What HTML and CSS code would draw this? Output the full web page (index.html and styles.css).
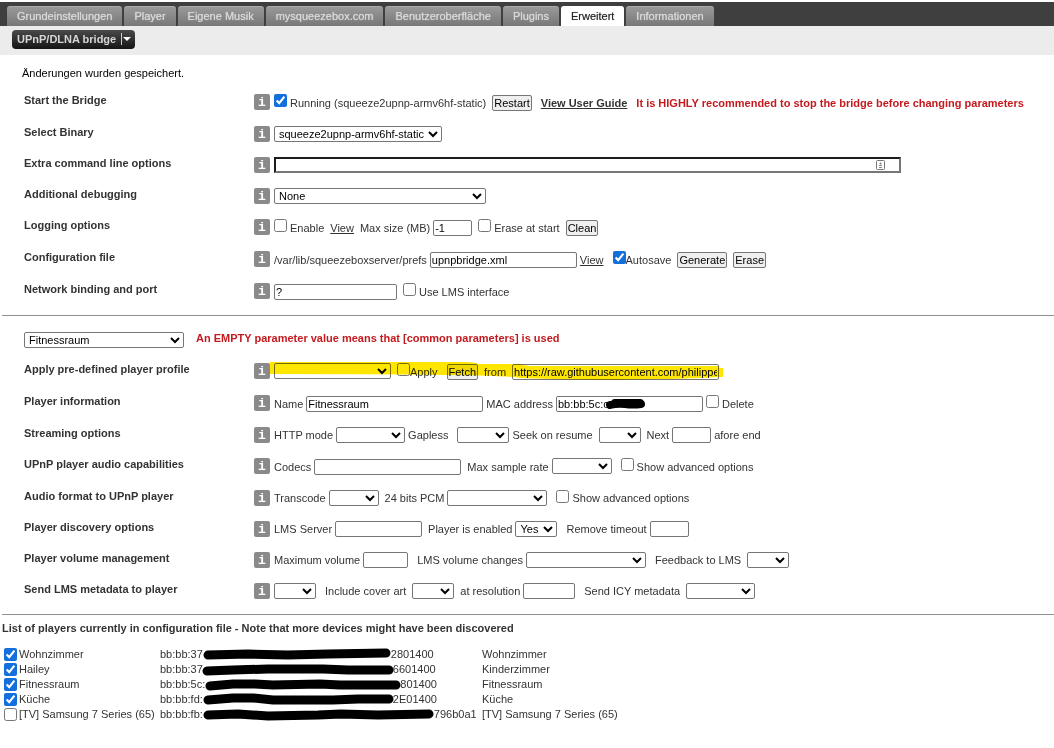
FILE: index.html
```html
<!DOCTYPE html>
<html lang="de">
<head>
<meta charset="utf-8">
<title>UPnP/DLNA bridge</title>
<link rel="stylesheet" href="styles.css">
</head>
<body>
<header class="top">
  <nav class="tabs">
    <a class="tab" href="#">Grundeinstellungen</a>
    <a class="tab" href="#">Player</a>
    <a class="tab" href="#">Eigene Musik</a>
    <a class="tab" href="#">mysqueezebox.com</a>
    <a class="tab" href="#">Benutzeroberfläche</a>
    <a class="tab" href="#">Plugins</a>
    <a class="tab active" href="#">Erweitert</a>
    <a class="tab" href="#">Informationen</a>
  </nav>
  <div class="subbar">
    <button class="plugin" type="button">UPnP/DLNA bridge<span class="arrow"></span></button>
  </div>
</header>
<main>
  <p class="message">Änderungen wurden gespeichert.</p>
  <section class="rows">
    <div class="row tall">
      <h2 class="label">Start the Bridge</h2><button class="info" type="button">i</button>
      <div class="fields"><input type="checkbox" id="run" checked><label class="s" for="run">Running (squeeze2upnp-armv6hf-static)</label><button class="btn m" type="button">Restart</button><a class="l" href="#"><b>View User Guide</b></a><strong class="warn l">It is HIGHLY recommended to stop the bridge before changing parameters</strong></div>
    </div>
    <div class="row">
      <h2 class="label">Select Binary</h2><button class="info" type="button">i</button>
      <div class="fields"><select class="w168" aria-label="Select Binary"><option>squeeze2upnp-armv6hf-static</option></select></div>
    </div>
    <div class="row">
      <h2 class="label">Extra command line options</h2><button class="info" type="button">i</button>
      <div class="fields"><span class="over wide"><input class="focused" type="text" aria-label="Extra command line options"><svg class="fill" viewBox="0 0 9 10"><rect x=".5" y=".5" width="8" height="9" rx="1" fill="#fff" stroke="#777"/><circle cx="4.5" cy="3.5" r="1" fill="#777"/><path d="M3 5.5h3M3 7.5h3" stroke="#888"/></svg></span></div>
    </div>
    <div class="row">
      <h2 class="label">Additional debugging</h2><button class="info" type="button">i</button>
      <div class="fields"><select class="w212" aria-label="Additional debugging"><option>None</option></select></div>
    </div>
    <div class="row tall">
      <h2 class="label">Logging options</h2><button class="info" type="button">i</button>
      <div class="fields"><input type="checkbox" id="log"><label class="s" for="log">Enable</label><a class="m" href="#">View</a><label class="m" for="size">Max size (MB)</label><input class="w39 s" type="text" id="size" value="-1"><input class="m" type="checkbox" id="ers"><label class="s" for="ers">Erase at start</label><button class="btn m" type="button">Clean</button></div>
    </div>
    <div class="row tall">
      <h2 class="label">Configuration file</h2><button class="info" type="button">i</button>
      <div class="fields"><label for="conf">/var/lib/squeezeboxserver/prefs</label><input class="w147 s" type="text" id="conf" value="upnpbridge.xml"><a class="s" href="#">View</a><input class="l" type="checkbox" id="auto" checked><label for="auto">Autosave</label><button class="btn m" type="button">Generate</button><button class="btn m" type="button">Erase</button></div>
    </div>
    <div class="row tall">
      <h2 class="label">Network binding and port</h2><button class="info" type="button">i</button>
      <div class="fields"><input class="w123" type="text" value="?" aria-label="Network binding and port"><input class="m" type="checkbox" id="lms"><label class="s" for="lms">Use LMS interface</label></div>
    </div>
  </section>
  <hr>
  <section class="rows">
    <div class="player">
      <select class="w160" aria-label="Player"><option>Fitnessraum</option></select>
      <strong class="warn">An EMPTY parameter value means that [common parameters] is used</strong>
    </div>
    <div class="row tall">
      <h2 class="label">Apply pre-defined player profile</h2><button class="info" type="button">i</button>
      <div class="fields"><span class="over marked"><select class="w117" aria-label="Profile"><option></option></select><input class="m" type="checkbox" id="apply"><label for="apply">Apply</label><button class="btn l" type="button">Fetch</button><label class="m" for="url">from</label><input class="w207 m" type="text" id="url" value="https://raw.githubusercontent.com/philippe44"><svg class="marker" viewBox="0 0 454 20" preserveAspectRatio="none"><path d="M0 1H195Q207 1 209 3H250Q256 5 265 5H450V7H454V16H450Q415 18 385 18Q330 20 250 17Q238 13 0 13Z" fill="#ffe600"/></svg></span></div>
    </div>
    <div class="row tall">
      <h2 class="label">Player information</h2><button class="info" type="button">i</button>
      <div class="fields"><label for="name">Name</label><input class="w177 s" type="text" id="name" value="Fitnessraum"><label class="s" for="mac">MAC address</label><span class="over s"><input class="w147" type="text" id="mac" value="bb:bb:5c:c"><svg class="blot" viewBox="0 0 41 11"><path d="M5 7Q12 5 20 6T36 6M10 5L35 5" fill="none" stroke="#000" stroke-width="8" stroke-linecap="round"/></svg></span><input class="s" type="checkbox" id="del"><label class="s" for="del">Delete</label></div>
    </div>
    <div class="row">
      <h2 class="label">Streaming options</h2><button class="info" type="button">i</button>
      <div class="fields"><label for="http">HTTP mode</label><select class="w69 s" id="http"><option></option></select><label class="s" for="gap">Gapless</label><select class="w52 l" id="gap"><option></option></select><label class="s" for="seek">Seek on resume</label><select class="w41 m" id="seek"><option></option></select><label class="m" for="next">Next</label><input class="w39 s" type="text" id="next"><span class="s">afore end</span></div>
    </div>
    <div class="row tall">
      <h2 class="label">UPnP player audio capabilities</h2><button class="info" type="button">i</button>
      <div class="fields"><label for="codecs">Codecs</label><input class="w147 s" type="text" id="codecs"><label class="m" for="rate">Max sample rate</label><select class="w60 s" id="rate"><option></option></select><input class="l" type="checkbox" id="adv1"><label class="s" for="adv1">Show advanced options</label></div>
    </div>
    <div class="row">
      <h2 class="label">Audio format to UPnP player</h2><button class="info" type="button">i</button>
      <div class="fields"><label for="trans">Transcode</label><select class="w49 s" id="trans"><option></option></select><label class="m" for="pcm">24 bits PCM</label><select class="w100 s" id="pcm"><option></option></select><input class="l" type="checkbox" id="adv2"><label class="s" for="adv2">Show advanced options</label></div>
    </div>
    <div class="row">
      <h2 class="label">Player discovery options</h2><button class="info" type="button">i</button>
      <div class="fields"><label for="srv">LMS Server</label><input class="w87 s" type="text" id="srv"><label class="m" for="en">Player is enabled</label><select class="w41 s" id="en"><option>Yes</option></select><label class="l" for="rem">Remove timeout</label><input class="w39 s" type="text" id="rem"></div>
    </div>
    <div class="row">
      <h2 class="label">Player volume management</h2><button class="info" type="button">i</button>
      <div class="fields"><label for="vol">Maximum volume</label><input class="w45 s" type="text" id="vol"><label class="l" for="chg">LMS volume changes</label><select class="w120 s" id="chg"><option></option></select><label class="l" for="fb">Feedback to LMS</label><select class="w41 m" id="fb"><option></option></select></div>
    </div>
    <div class="row">
      <h2 class="label">Send LMS metadata to player</h2><button class="info" type="button">i</button>
      <div class="fields"><select class="w41" aria-label="Send metadata"><option></option></select><label class="l" for="art">Include cover art</label><select class="w41 m" id="art"><option></option></select><label class="m" for="res">at resolution</label><input class="w52 s" type="text" id="res"><label class="l" for="icy">Send ICY metadata</label><select class="w69 m" id="icy"><option></option></select></div>
    </div>
  </section>
  <hr>
  <h2 class="list-title">List of players currently in configuration file - Note that more devices might have been discovered</h2>
  <table class="list">
    <tr><td><label><input type="checkbox" checked>Wohnzimmer</label></td><td><span class="id">bb:bb:37<svg width="188" height="13" viewBox="0 0 188 13"><path d="M5 7L45 6L85 7L125 6L183 5" /></svg>2801400</span></td><td>Wohnzimmer</td></tr>
    <tr><td><label><input type="checkbox" checked>Hailey</label></td><td><span class="id">bb:bb:37<svg width="190" height="13" viewBox="0 0 190 13"><path d="M4 8L30 7L65 6L120 6L145 7L186 7"/></svg>6601400</span></td><td>Kinderzimmer</td></tr>
    <tr><td><label><input type="checkbox" checked>Fitnessraum</label></td><td><span class="id">bb:bb:5c:<svg width="195" height="13" viewBox="0 0 195 13"><path d="M5 8L28 6L50 6L68 7L115 6L135 7L191 7"/></svg>801400</span></td><td>Fitnessraum</td></tr>
    <tr><td><label><input type="checkbox" checked>Küche</label></td><td><span class="id">bb:bb:fd:<svg width="190" height="13" viewBox="0 0 190 13"><path d="M5 7L30 5L50 5L70 7L110 7L130 7L155 6L186 6"/></svg>2E01400</span></td><td>Küche</td></tr>
    <tr><td><label><input type="checkbox">[TV] Samsung 7 Series (65)</label></td><td><span class="id">bb:bb:fb:<svg width="231" height="13" viewBox="0 0 231 13"><path d="M5 7L35 6L65 8L115 7L138 6L175 7L226 6"/></svg>796b0a1</span></td><td>[TV] Samsung 7 Series (65)</td></tr>
  </table>
</main>
</body>
</html>
```
FILE: styles.css
```css
* { box-sizing: border-box; }
body { margin: 0; background: #fff; color: #333; font: 11px/16px "Liberation Sans", Arial, sans-serif; }
h2, p { margin: 0; font-size: 11px; }
a { color: #333; }
button, input, select { margin: 0; font: 11px "Liberation Sans", Arial, sans-serif; color: #000; }

.top { padding-top: 2px; }
.tabs { display: flex; gap: 2px; padding: 4px 7px 0; background: #3f3f3f; }
.tab { padding: 0 10px; height: 20px; line-height: 18px; border-radius: 3px 3px 0 0; border-top: 1px solid #aaa; background: linear-gradient(#999, #777); color: #d8d8d8; text-decoration: none; text-shadow: 0 0 1px #d8d8d8; }
.tab.active { background: #fff; border-color: #fff; color: #222; text-shadow: 0 0 1px #888; }
.subbar { height: 29px; padding: 4px 12px; background: #ececec; }
.plugin { display: flex; align-items: center; height: 19px; padding: 0 4px 2px 5px; border: 0; border-radius: 4px; background: linear-gradient(#4a4a4a, #151515); color: #d6d6d6; font-weight: bold; }
.arrow { display: flex; align-items: center; height: 12px; margin-left: 5px; padding-left: 1px; border-left: 1px solid #ccc; }
.arrow::after { content: ""; border: 4px solid transparent; border-top-color: #fff; border-bottom: 0; }

.message { padding: 10px 22px 13px; color: #000; }
.rows { padding-left: 24px; }
.row { display: flex; align-items: flex-start; min-height: 31px; }
.row.tall { min-height: 32px; }
.label { width: 230px; flex: none; line-height: 12px; }
.info { flex: none; width: 16px; height: 16px; margin-right: 4px; padding: 1px 0 0; border: 0; border-radius: 2px; background: #8a8a8a; color: #fff; font: bold 13px/15px "Liberation Mono", monospace; }
.fields, .over { display: flex; flex: 1; align-items: flex-start; white-space: nowrap; }
.over { position: relative; flex: none; }
.tall label, .tall a, .tall .btn, .tall .warn, .tall input[type=text] { margin-top: 1px; }
input[type=text], select { height: 16px; border: 1px solid #767676; border-radius: 2px; background-color: #fff; }
input[type=text] { padding: 0 1px; }
select { padding: 0; }
input[type=checkbox] { flex: none; width: 13px; height: 13px; accent-color: #136fdc; }
.btn { height: 16px; padding: 0 1px; border: 1px solid #767676; border-radius: 2px; background: #efefef; }
.warn { color: #c41a1f; }
.s { margin-left: 3px; }
.m { margin-left: 6px; }
.l { margin-left: 9px; }

.over.wide { flex: 0 1 627px; }
input.focused { width: 100%; border: 2px solid #767676; border-top-color: #1c1c1c; border-left-color: #1c1c1c; border-radius: 0; }
.fill { position: absolute; right: 16px; top: 3px; width: 9px; height: 10px; }
.marker { position: absolute; left: -4px; top: -2px; width: calc(100% + 8px); height: 20px; mix-blend-mode: multiply; pointer-events: none; }
.blot { position: absolute; left: 49px; top: 3px; width: 41px; height: 11px; }

.w39 { width: 39px; } .w41 { width: 42px; } .w45 { width: 45px; } .w49 { width: 50px; } .w52 { width: 52px; }
.w60 { width: 60px; } .w69 { width: 69px; } .w87 { width: 87px; } .w100 { width: 100px; } .w117 { width: 117px; }
.w120 { width: 120px; } .w123 { width: 123px; } .w147 { width: 147px; } .w160 { width: 160px; } .w168 { width: 168px; }
.w177 { width: 177px; } .w207 { width: 207px; } .w212 { width: 212px; }

hr { height: 1px; margin: 0 0 0 2px; border: 0; background: #8f8f8f; }
.player { display: flex; gap: 12px; min-height: 47px; padding-top: 16px; align-items: flex-start; }
.player .warn { line-height: 12px; }
.list-title { padding: 5px 2px 11px; }
.list { margin-left: 4px; border-collapse: collapse; line-height: 15px; white-space: nowrap; }
.list td { padding: 0; height: 15px; }
.list td:first-child { width: 156px; }
.list td:nth-child(2) { width: 322px; }
.list label, .id { display: flex; align-items: center; gap: 2px; height: 15px; }
.id { gap: 0; }
.id svg { flex: none; overflow: visible; }
.id path { fill: none; stroke: #000; stroke-width: 9; stroke-linecap: round; stroke-linejoin: round; }
```
